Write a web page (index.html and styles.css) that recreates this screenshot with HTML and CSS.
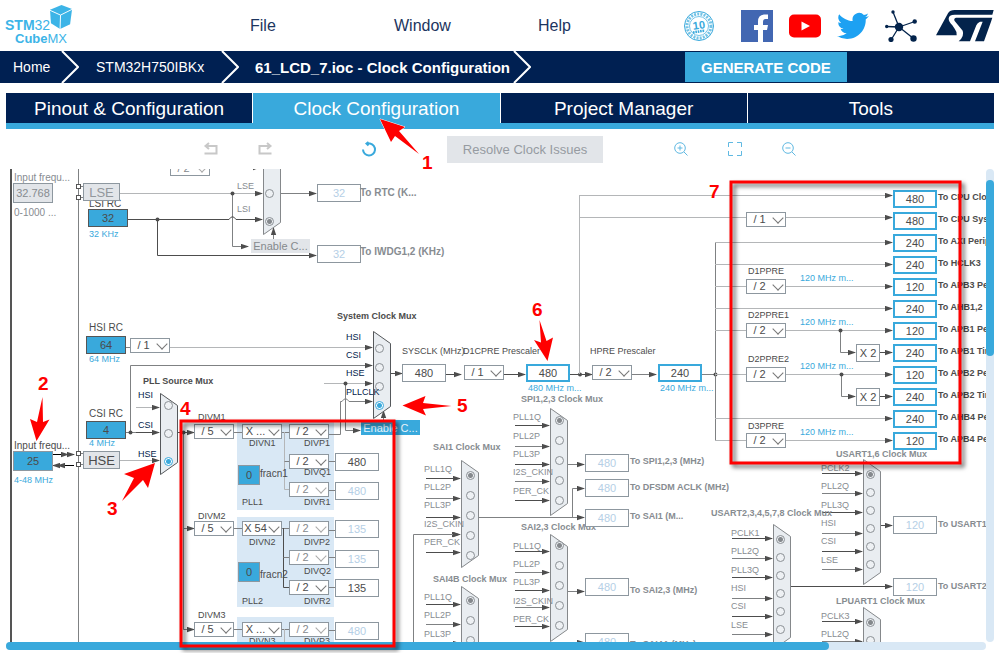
FILE: index.html
```html
<!DOCTYPE html>
<html lang="en">
<head>
<meta charset="utf-8">
<title>STM32CubeMX - Clock Configuration</title>
<link rel="stylesheet" href="styles.css">
</head>
<body>
<header class="top">
  <a class="brand" href="#" aria-label="STM32CubeMX">
    <span class="brand-one"><b>STM</b>32</span>
    <span class="brand-two"><b>Cube</b>MX</span>
    <svg class="cube" viewBox="0 0 24 26" aria-hidden="true">
      <path fill="#3cb4e7" d="M12 0 23 4 21 20 10.500 25 1 19 0 5Z"/>
      <path fill="none" stroke="#fff" stroke-width="1" d="M0 5.500 11 10.500 23 4.500M11 10.500 10.500 25"/>
    </svg>
  </a>
  <nav class="menu">
    <a href="#">File</a><a href="#">Window</a><a href="#">Help</a>
  </nav>
  <div class="social">
    <a href="#" aria-label="10 years longevity">
      <svg viewBox="0 0 32 32"><g fill="none" stroke="#39a9dc"><circle cx="16" cy="16" r="14.500"/><circle cx="16" cy="16" r="12" stroke-width="3" stroke-dasharray="2 1.200" opacity=".7"/><circle cx="16" cy="16" r="9.500" stroke-width=".7"/></g><text x="16" y="19" transform="rotate(-8 16 16)" text-anchor="middle" class="seal-number">10</text><path d="M10 22.500 22 20.500" stroke="#39a9dc" stroke-width="2.500" stroke-dasharray="1.600 .8"/></svg>
    </a>
    <a href="#" aria-label="Facebook">
      <svg viewBox="0 0 32 32"><path fill="#4267b2" d="M0 0H32V32H0Z"/><path fill="#fff" d="M17 32V20H13V15H17V11.500Q17 5 23 4.500H27V9H24.500Q22 9 22 12V15H27L26 20H22V32Z"/></svg>
    </a>
    <a href="#" aria-label="YouTube">
      <svg viewBox="0 0 32 32"><rect x="0" y="4.500" width="32" height="23" rx="5" fill="#f00"/><path fill="#fff" d="M12.500 11.500V20.500L21 16Z"/></svg>
    </a>
    <a href="#" aria-label="Twitter">
      <svg viewBox="0 0 24 24"><path fill="#1da1f2" d="M23.950 4.570a10 10 0 0 1-2.820.77 4.960 4.960 0 0 0 2.160-2.720c-.95.55-2 .95-3.130 1.180a4.920 4.920 0 0 0-8.380 4.480C7.690 8.100 4.070 6.130 1.640 3.160a4.920 4.920 0 0 0 1.520 6.570 4.900 4.900 0 0 1-2.230-.61v.06a4.920 4.920 0 0 0 3.950 4.830 5 5 0 0 1-2.210.08 4.940 4.940 0 0 0 4.600 3.420A9.870 9.870 0 0 1 0 19.540a14 14 0 0 0 7.550 2.210c9.050 0 14-7.500 14-13.980 0-.21 0-.42-.02-.63a9.940 9.940 0 0 0 2.420-2.570Z"/></svg>
    </a>
    <a href="#" aria-label="Community">
      <svg viewBox="0 0 32 32"><g fill="#03234b"><path stroke="#03234b" stroke-width="1.300" fill="none" d="M14 17 8 2M14 17 1.500 16.500M14 17 30 11.500M14 17 28.500 28.500M14 17 6 30"/><circle cx="14" cy="17" r="4.200"/><circle cx="8" cy="2" r="1.700"/><circle cx="1.700" cy="16.500" r="1.700"/><circle cx="29.700" cy="11.500" r="2.200"/><circle cx="28.500" cy="28.500" r="3.200"/><circle cx="6" cy="29.500" r="2.600"/></g></svg>
    </a>
    <a class="st" href="#" aria-label="ST">
      <svg viewBox="0 0 174 96"><g fill="#03234b"><path d="M36 10Q42 0 56 0H173L169 14H56Q38 14 38 26 38 34 49 46L56 56Q64 66 62 76H0Z"/><path d="M60 23Q52 25 56 33L80 62Q86 78 68 94H102L121 46Q124 38 132 35H140L117 94H144L165 35 169 23Z"/></g></svg>
    </a>
  </div>
</header>

<div class="pathbar">
  <ol class="crumbs">
    <li><a href="#">Home</a><svg viewBox="0 0 18 32"><path d="M1 0 17 16 1 32"/></svg></li>
    <li><a href="#">STM32H750IBKx</a><svg viewBox="0 0 18 32"><path d="M1 0 17 16 1 32"/></svg></li>
    <li class="current"><a href="#">61_LCD_7.ioc - Clock Configuration</a><svg viewBox="0 0 18 32"><path d="M1 0 17 16 1 32"/></svg></li>
  </ol>
  <button class="generate" type="button">GENERATE CODE</button>
</div>

<main class="work">
  <nav class="tabs">
    <a href="#">Pinout &amp; Configuration</a>
    <a class="active" href="#">Clock Configuration</a>
    <a href="#">Project Manager</a>
    <a href="#">Tools</a>
  </nav>
  <div class="tools">
    <div class="group history">
      <button class="icon muted" type="button" aria-label="Undo"><svg viewBox="0 0 14 14"><path d="M5 1 1.500 4 5 7M1.500 4H12.500V11.500H0.500" /></svg></button>
      <button class="icon muted" type="button" aria-label="Redo"><svg viewBox="0 0 14 14"><path d="M9 1 12.500 4 9 7M12.500 4H1.500V11.500H13.500"/></svg></button>
    </div>
    <button class="icon strong" type="button" aria-label="Reset"><svg viewBox="0 0 14 14"><path d="M4.500 1.500H8A6 6 0 1 1 1 7.500M6.500 0 4.500 1.500 6.500 3.500"/></svg></button>
    <button class="resolve" type="button" disabled>Resolve Clock Issues</button>
    <div class="group">
      <button class="icon" type="button" aria-label="Zoom in"><svg viewBox="0 0 14 14"><circle cx="6" cy="6" r="5.300"/><path d="M10 10 13.500 13.500M3.500 6H8.500M6 3.500V8.500"/></svg></button>
      <button class="icon" type="button" aria-label="Fit"><svg viewBox="0 0 14 14"><path d="M.5 5V.5H5M9 .5H13.500V5M13.500 9V13.500H9M5 13.500H.5V9"/></svg></button>
      <button class="icon" type="button" aria-label="Zoom out"><svg viewBox="0 0 14 14"><circle cx="6" cy="6" r="5.300"/><path d="M10 10 13.500 13.500M3.500 6H8.500"/></svg></button>
    </div>
  </div>
  <div class="pane">
    <div class="view"><div class="sheet" id="sheet"></div></div>
    <div class="bar-y"><div></div></div>
    <div class="bar-x"><div></div></div>
  </div>
</main>

<svg class="notes" viewBox="0 0 999 653" width="999" height="653" aria-hidden="true">
  <g class="frames">
    <rect x="181" y="421" width="213" height="225"/>
    <rect x="731" y="182" width="229" height="281"/>
  </g>
  <g class="pointers">
    <path d="M380 119 405 127 399 131 419 154 395 136 391 142Z"/>
    <path d="M36.500 441 30 419 37 422 42.500 397 43 422 49.500 419.500Z"/>
    <path d="M155 463 148 488 143 480 122 501 134 478 124 474Z"/>
    <path d="M402.500 405.500 425.500 396 423 403 451.500 406 423 409 426 415.500Z"/>
    <path d="M547.500 361 534 340 541 342.500 539.500 320 546.500 341 553 337.500Z"/>
  </g>
  <g class="digits">
    <text x="422" y="169">1</text><text x="38" y="390">2</text><text x="107" y="515">3</text>
    <text x="180" y="415">4</text><text x="457" y="412">5</text><text x="532" y="316">6</text><text x="709" y="198">7</text>
  </g>
</svg>
<script src="clock.js"></script>
</body>
</html>
```

FILE: styles.css
```css
* { box-sizing: border-box; }

body {
  margin: 0;
  min-height: 100vh;
  display: flex;
  flex-direction: column;
  position: relative;
  overflow: hidden;
  background: #fff;
  color: #4b4b4b;
  font-family: "Liberation Sans", Arial, sans-serif;
}

a { color: inherit; text-decoration: none; }
button { font: inherit; border: 0; padding: 0; background: none; }

/* Header */
.top { display: flex; align-items: center; height: 51px; padding-right: 5px; }
.brand {
  position: relative;
  width: 250px;
  padding: 13px 0 0 5px;
  color: #3cb4e7;
  font-size: 14px;
  line-height: 14px;
}
.brand span { display: block; }
.brand-two { padding-left: 10px; font-size: 13px; }
.cube { position: absolute; left: 50px; top: 0; width: 23px; height: 25px; }
.menu { display: grid; grid-template-columns: repeat(3, 144px); color: #1c3560; font-size: 16px; }
.social { display: flex; align-items: center; gap: 16px; margin-left: auto; }
.social svg { display: block; width: 32px; height: 32px; }
.social a:first-child { margin-right: 10px; }
.social .st svg { width: 58px; }
.social .st { margin-left: 3px; }
.seal-number { fill: #39a9dc; font-size: 11px; font-weight: bold; }

/* Breadcrumbs */
.pathbar { display: flex; align-items: stretch; height: 32px; background: #002052; color: #fff; }
.crumbs {
  display: grid;
  grid-template-columns: 79px 160px 292px;
  margin: 0 154px 0 0;
  padding: 0;
  list-style: none;
  font-size: 14px;
}
.crumbs li { display: flex; align-items: center; justify-content: space-between; padding-left: 17px; white-space: nowrap; }
.crumbs li:first-child { padding-left: 13px; }
.crumbs .current { padding-left: 16px; font-weight: bold; font-size: 15px; }
.crumbs svg { width: 18px; height: 32px; flex: none; fill: none; stroke: #fff; stroke-width: 2; }
.generate { margin: 1px 0; padding: 0 16px; background: #39a9dc; color: #fff; font-size: 15px; font-weight: bold; }

/* Tabs and toolbar */
.work { flex: 1; display: flex; flex-direction: column; padding: 10px 5px 3px 6px; }
.tabs { display: grid; grid-template-columns: repeat(4, 1fr); gap: 1px; border-bottom: 6px solid #39a9dc; }
.tabs a { height: 30px; line-height: 31px; background: #002052; color: #fff; font-size: 19px; text-align: center; }
.tabs .active { background: #39a9dc; }
.tools { display: flex; align-items: center; gap: 63px; height: 40px; padding-left: 190px; }
.group { display: flex; gap: 24px; }
.history { margin-right: 11px; }
.icon { width: 30px; height: 28px; display: grid; place-items: center; }
.icon svg { width: 14px; height: 14px; overflow: visible; fill: none; stroke: #60b9e2; stroke-width: 1; }
.icon.muted svg { stroke: #c8c8c8; stroke-width: 2; }
.icon.strong svg { stroke: #39a9dc; stroke-width: 2; }
.resolve { width: 156px; height: 27px; background: #e2e5e9; color: #969ba1; font-size: 13px; white-space: nowrap; }

/* Scrolling pane */
.pane { flex: 1; display: grid; grid-template-columns: 1fr 8px; grid-template-rows: 1fr 8px; min-height: 0; }
.view { position: relative; overflow: hidden; }
.sheet { position: absolute; left: -6px; top: -169px; width: 1200px; height: 1300px; }
.bar-y, .bar-x { background: #d9e8f5; border-radius: 4px; }
.bar-y { padding-top: 11px; }
.bar-y div { height: 38%; border-radius: 4px; background: #39a9dc; }
.bar-x div { width: 84%; height: 8px; border-radius: 4px; background: #39a9dc; }

/* Diagram */
.wires { position: absolute; left: 0; top: 0; }
.wires .line { fill: none; stroke: #7f8183; }
.wires .faint { stroke: #b4b6b8; }
.wires .deep { stroke: #4d4d4d; }
.wires .black { stroke: #000; }
.wires .mux { fill: #e9edf1; stroke: #55585b; }
.wires .mux.off { stroke: #85888b; }
.wires .panel { fill: #d9e8f5; }
.wires .rail { fill: #555; }
.wires .pin { fill: #fff; stroke: #555; }
.wires .dot { fill: #4d4d4d; }

.text { position: absolute; font-size: 9px; line-height: 12px; white-space: pre; }
.text.input { font-size: 10px; }
.text.dim { color: #878c91; }
.text.navy { color: #03234b; }
.text.sky { color: #39a9dc; }
.text.title { font-weight: bold; }

.box {
  position: absolute;
  height: 18px;
  margin: 0;
  padding: 0;
  border: 1px solid #8d979f;
  border-radius: 0;
  background: #fff;
  color: #4b4b4b;
  font-family: inherit;
  font-size: 11px;
  text-align: center;
}
.box.off { color: #b5cfe6; }
.box.hot { border: 2px solid #39a9dc; }
.box.full { background: #39a9dc; border-color: #555; }
.box.entry { height: 20px; background: #39a9dc; border-color: #8d979f; }
.box.entry.gone { background: #e2e5e9; color: #868b90; }
.box.osc { background: #e2e5e9; font-size: 13px; }
.box.osc.gone { color: #92979c; }
.box.enable { height: 14px; border: 0; background: #e2e5e9; color: #85898d; }
.box.enable.live { height: 15px; background: #39a9dc; color: #e8f4fb; }

.pick { position: absolute; width: 40px; height: 15px; }
.pick select {
  appearance: none;
  display: block;
  width: 100%;
  height: 100%;
  margin: 0;
  padding: 0 13px 0 0;
  border: 1px solid #8d979f;
  border-radius: 0;
  background: #fff;
  color: #4b4b4b;
  font-family: inherit;
  font-size: 11px;
  line-height: 13px;
  text-align: center;
  text-align-last: center;
}
.pick::after {
  content: "";
  position: absolute;
  right: 4px;
  top: 2px;
  width: 7px;
  height: 7px;
  border: solid #777;
  border-width: 0 1px 1px 0;
  transform: rotate(45deg);
  pointer-events: none;
}
.pick.off select { color: #85898d; }
.pick.off::after { border-color: #aaa; }

.dotpick {
  appearance: none;
  position: absolute;
  width: 9px;
  height: 9px;
  margin: 0;
  border: 1px solid #8b9095;
  border-radius: 50%;
  background: #eef1f4;
}
.dotpick:checked { background: radial-gradient(circle, #85898d 0 2px, #eef1f4 3px); }
.dotpick.live:checked { border-color: #39a9dc; background: radial-gradient(circle, #39a9dc 0 2px, #fff 3px); }

/* Callouts */
.notes { position: absolute; left: 0; top: 0; pointer-events: none; }
.frames rect { fill: none; stroke: #f00; stroke-width: 3; }
.frames { filter: drop-shadow(3px 3px 2px rgba(0, 0, 0, .6)); }
.pointers path { fill: #f00; stroke: #fff; stroke-width: 1; paint-order: stroke; }
.digits { fill: #f00; font-size: 19px; font-weight: bold; }
```

FILE: clock.js
```js
const sheet = document.getElementById("sheet");
let serial = 0;

/* Texts: [text, left, vertical centre, classes] */
function text([value, x, y, cls = ""], target) {
  const el = document.createElement(target ? "label" : "span");
  if (target) el.htmlFor = target;
  el.className = "text " + cls;
  el.textContent = value;
  el.style.left = x + "px";
  el.style.top = y - 6 + "px";
  sheet.append(el);
}

function place(el, x, y, w) {
  el.style.left = x + "px";
  el.style.top = y + "px";
  if (w) el.style.width = w + "px";
  sheet.append(el);
}

/* Value fields: [value, left, top, width, classes, label text] */
function field([value, x, y, w, cls, label]) {
  const el = document.createElement("input");
  el.type = "text";
  el.id = "n" + ++serial;
  el.value = value;
  el.className = "box " + cls;
  place(el, x, y, w);
  if (label) text(label, el.id);
  else el.setAttribute("aria-label", "Frequency");
}

function button([value, x, y, w, cls]) {
  const el = document.createElement("button");
  el.type = "button";
  el.textContent = value;
  el.className = "box " + cls;
  place(el, x, y, w);
}

/* Dividers: [value, left, top, classes, label text] */
function pick([value, x, y, cls = "", label]) {
  const wrap = document.createElement("div");
  const el = document.createElement("select");
  wrap.className = "pick " + cls;
  el.id = "n" + ++serial;
  el.add(new Option(value));
  wrap.append(el);
  place(wrap, x, y);
  if (label) text(label, el.id);
  else el.setAttribute("aria-label", "Divider");
}

const shapes = [];
const line = (d, cls = "") => shapes.push(`<path class="line ${cls}" d="M${d}"/>`);
const arrow = (d, cls = "") => shapes.push(`<path class="line ${cls}" marker-end="url(#tip)" d="M${d}"/>`);
const dot = (x, y) => shapes.push(`<circle class="dot" cx="${x}" cy="${y}" r="2"/>`);
const pin = (x, y) => shapes.push(`<rect class="pin" x="${x}" y="${y}" width="4" height="4"/>`);

/* Selector: body from top to bottom, one radio per input */
function mux(m) {
  const l = m.x + 0.5, r = m.x + 17.5;
  shapes.push(`<path class="mux ${m.live ? "" : "off"}" d="M${l} ${m.top}.5L${r} ${m.top + 12}.5V${m.bottom - 12}.5L${l} ${m.bottom}.5Z"/>`);
  if (m.title) text([m.title[0], m.title[1], m.title[2], "title" + (m.live ? "" : " dim")]);
  m.rows.forEach(([name, labelY, wireY, radioY], i) => {
    const el = document.createElement("input");
    el.type = "radio";
    el.name = "mux" + m.x + "-" + m.top;
    el.id = "n" + ++serial;
    el.checked = i === m.on;
    el.className = "dotpick" + (m.live ? " live" : "");
    place(el, m.radioX - 4, radioY - 4);
    text([name, m.labelX, labelY, m.live ? "navy" : "dim"], el.id);
    if (m.wireX) arrow(`${m.wireX} ${wireY}.5H${m.x - 1}`, i % 2 ? "" : "deep");
  });
}

/* Frame of the chip and its pins */
shapes.push('<rect class="rail" x="10" y="169" width="2" height="700"/>');
line("78.5 169V869");
for (const y of [186, 197, 453, 464]) line(`80 ${y}.5H83`);
for (const y of [184, 195, 451, 462]) pin(76.5, y + 0.5);

/* PLL panels */
for (const [y, h] of [[421, 89], [517, 90], [617, 90]]) {
  shapes.push(`<rect class="panel" x="237" y="${y}" width="97" height="${h}"/>`);
}

/* Low speed wiring */
arrow("120 193.5H262", "faint");
arrow("232.5 193V246.5H248");
arrow("128 219.5H229Q232.5 214 236 219.5H262", "deep");
arrow("157.5 219V255.5H316", "deep");
arrow("273.500 240V228");
arrow("250 167.500H260");
arrow("281 193.5H316");
dot(232.5, 193.5); dot(157.5, 219.5);

/* Sources into the system selector */
line("126 347.5H130");
arrow("170 347.5H372", "faint");
line("126 432.5H136");
arrow("130.5 432V365.5H372");
arrow("136 407.5H159", "faint");
arrow("136 432.5H159", "deep");
arrow("120 460.5H159", "faint");
dot(130.5, 432.5);
arrow("324 383.5H372", "faint");
arrow("345.5 383V430.5H360");
arrow("329 434.500H340.5V401.500H342Q345.500 396 349 401.500H372");
arrow("383.500 420V411");
dot(345.5, 383.5);
arrow("53 454.5H74", "black"); arrow("60 454.5H68", "black");
arrow("74 465.5H53", "black"); arrow("70 465.5H58", "black");

/* PLL wiring */
arrow("178 432.5H194", "deep");
arrow("183.5 432V528.5H194");
arrow("183.5 528V629.5H194");
dot(183.5, 432.5);
for (const y of [432, 528, 629]) { line(`234 ${y}.5H242`); line(`282 ${y}.5H289`); }
line("284.5 432V489.5H289", "faint"); line("284.5 461.5H289");
line("283.5 528V587.5H289", "deep"); line("283.5 557.5H289");
line("284.500 629V700", "faint");
for (const y of [461, 490, 530, 557, 587, 630]) line(`329 ${y}.5H335`);

/* System clock chain */
arrow("391 373.5H402", "deep"); arrow("446 374.5H461", "deep");
arrow("504 374.5H525", "deep"); arrow("570 374.5H592", "deep");
arrow("632 374.5H656"); line("702 374.5H746");
dot(580, 374.5); dot(715.5, 374.5);
line("579.5 374V195.5", "faint");
line("715.5 242V440");
arrow("579 195.5H892", "faint");
arrow("579 217.5H892", "faint");
[242, 264, 286, 308, 330, 374, 418, 440].forEach(y => arrow(`715 ${y}.5H892`, "faint"));
arrow("840.5 330V352.5H855"); arrow("841.5 374V396.5H855");
arrow("880 352.5H892", "deep"); arrow("880 396.5H892", "deep");
dot(840.5, 330.5); dot(841.5, 374.5);

/* Peripheral wiring */
arrow("568 464.5H584"); arrow("479 517.5H584"); arrow("572.5 517V488.5H584");
arrow("568 591.5H584"); arrow("413.5 700V534.5H459"); arrow("572 642.500H584");
arrow("881 525.5H892", "deep"); arrow("791 586.5H892", "deep");

/* Selectors; rows are [name, label y, wire y, radio y] */
mux({ x: 263, top: 120, bottom: 234, radioX: 269, labelX: 237, on: 1,
  rows: [["LSE", 186, 0, 193], ["LSI", 209, 0, 221]] });
mux({ x: 160, top: 393, bottom: 474, radioX: 168, labelX: 138, on: 2, live: true,
  title: ["PLL Source Mux", 143, 381],
  rows: [["HSI", 395, 0, 405], ["CSI", 425, 0, 433], ["HSE", 454, 0, 461]] });
mux({ x: 373, top: 331, bottom: 418, radioX: 379, labelX: 346, on: 3, live: true,
  title: ["System Clock Mux", 337, 316],
  rows: [["HSI", 337, 0, 348], ["CSI", 355, 0, 367], ["HSE", 373, 0, 386], ["PLLCLK", 392, 0, 405]] });

const audio = ["PLL1Q", "PLL2P", "PLL3P", "I2S_CKIN", "PER_CK"];
function audioMux(x, top, title, labels, wires, radios) {
  mux({ x, top, bottom: top + 107, radioX: x + 9, labelX: x - 37, wireX: x - 35, on: 0, title,
    rows: radios.map((r, i) => [audio[i], labels[i], wires[i], r]) });
}
audioMux(550, 408, ["SPI1,2,3 Clock Mux", 521, 399], [417, 436, 454, 472, 491], [425, 446, 464, 481, 500], [420, 440, 460, 480, 500]);
audioMux(461, 460, ["SAI1 Clock Mux", 433, 447], [469, 487, 505, 524, 542], [478, 498, 517, 534, 552], [475, 495, 515, 535, 555]);
audioMux(550, 534, ["SAI2,3 Clock Mux", 521, 527], [546, 564, 582, 601, 619], [551, 572, 590, 607, 626], [545, 565, 585, 605, 625]);
audioMux(461, 586, ["SAI4B Clock Mux", 433, 579], [597, 615, 634], [604, 624, 643], [600, 620, 640]);

function uartMux(x, top, names, title) {
  mux({ x, top, bottom: top + 125, radioX: x + 7, labelX: x - 42, wireX: x - 41, on: 0, title,
    rows: names.map((n, i) =>
      [n, top + [9, 27, 46, 64, 82, 101][i], top + [14, 34, 53, 74, 92, 110][i], top + 15 + i * 18]) });
}
uartMux(863, 459, ["PCLK2", "PLL2Q", "PLL3Q", "HSI", "CSI", "LSE"], ["USART1,6 Clock Mux", 836, 454]);
uartMux(773, 524, ["PCLK1", "PLL2Q", "PLL3Q", "HSI", "CSI", "LSE"], ["USART2,3,4,5,7,8 Clock Mux", 711, 513]);
uartMux(863, 607, ["PCLK3", "PLL2Q"], ["LPUART1 Clock Mux", 836, 601]);

/* Oscillators and inputs */
[
  ["32.768", 13, 183, 40, "entry gone", ["Input frequ...", 14, 178, "input dim"]],
  ["25", 13, 451, 40, "entry", ["Input frequ...", 14, 446, "input"]],
  ["32", 88, 209, 40, "full", ["LSI RC", 89, 204, "input"]],
  ["64", 86, 336, 40, "full", ["HSI RC", 89, 328, "input"]],
  ["4", 86, 421, 40, "full", ["CSI RC", 89, 414, "input"]],
  ["0", 238, 465, 22, "entry", ["fracn1", 260, 474, "input"]],
  ["0", 238, 562, 22, "entry", ["fracn2", 260, 575, "input"]],
  ["32", 317, 184, 44, "off", ["To RTC (K...", 360, 193, "input title dim"]],
  ["32", 317, 245, 44, "off", ["To IWDG1,2 (KHz)", 360, 252, "input title dim"]],
  ["480", 402, 364, 44, "", ["SYSCLK (MHz)", 402, 351]],
  ["480", 526, 364, 44, "hot"],
  ["240", 658, 364, 44, "hot"],
  ["480", 335, 453, 44, ""],
  ["480", 335, 482, 44, "off"],
  ["135", 335, 520, 44, "off"],
  ["135", 335, 550, 44, "off"],
  ["135", 335, 579, 44, ""],
  ["480", 335, 622, 44, "off"],
  ["480", 585, 454, 44, "off", ["To SPI1,2,3 (MHz)", 630, 461, "title dim"]],
  ["480", 585, 479, 44, "off", ["To DFSDM ACLK (MHz)", 630, 487, "title dim"]],
  ["480", 585, 509, 44, "off", ["To SAI1 (M...", 630, 516, "title dim"]],
  ["480", 585, 578, 44, "off", ["To SAI2,3 (MHz)", 630, 590, "title dim"]],
  ["480", 585, 633, 44, "off", ["To SAI4A (MHz)", 630, 644, "title dim"]],
  ["120", 893, 516, 44, "off", ["To USART1,6 (MHz)", 938, 524, "title dim"]],
  ["120", 893, 578, 44, "off", ["To USART2,3 (MHz)", 938, 586, "title dim"]],
  ["X 2", 856, 344, 24, ""],
  ["X 2", 856, 388, 24, ""],
].forEach(field);

/* Bus outputs, one row every 22 units */
[
  ["480", "CPU Clock"], ["480", "CPU Systick"], ["240", "AXI Peripheral"], ["240", "HCLK3"],
  ["120", "APB3 Peripheral"], ["240", "AHB1,2"], ["120", "APB1 Peripheral"], ["240", "APB1 Timer"],
  ["120", "APB2 Peripheral"], ["240", "APB2 Timer"], ["240", "AHB4 Peripheral"], ["120", "APB4 Peripheral"],
].forEach(([value, name], i) =>
  field([value, 893, 190 + 22 * i, 44, "hot", ["To " + name, 938, 197 + 22 * i, "title"]]));

[
  ["LSE", 83, 183, 37, "osc gone"],
  ["HSE", 83, 451, 37, "osc"],
  ["Enable C...", 251, 239, 59, "enable"],
  ["Enable C...", 361, 420, 59, "enable live"],
].forEach(button);

[
  ["/ 2", 170, 161, "off"],
  ["/ 1", 130, 338],
  ["/ 5", 194, 424, "", ["DIVM1", 198, 417]],
  ["/ 5", 194, 521, "", ["DIVM2", 198, 516]],
  ["/ 5", 194, 622, "", ["DIVM3", 198, 615]],
  ["X ...", 242, 424, "", ["DIVN1", 249, 443]],
  ["/ 2", 289, 424, "", ["DIVP1", 304, 443]],
  ["/ 2", 289, 454, "", ["DIVQ1", 304, 472]],
  ["/ 2", 289, 482, "off", ["DIVR1", 304, 502]],
  ["X 54", 242, 521, "", ["DIVN2", 249, 542]],
  ["/ 2", 289, 521, "off", ["DIVP2", 304, 542]],
  ["/ 2", 289, 550, "off", ["DIVQ2", 304, 571]],
  ["/ 2", 289, 580, "", ["DIVR2", 304, 601]],
  ["X ...", 242, 622, "", ["DIVN3", 249, 641]],
  ["/ 2", 289, 622, "off", ["DIVP3", 304, 641]],
  ["/ 1", 464, 365, "", ["D1CPRE Prescaler", 463, 351]],
  ["/ 2", 592, 365, "", ["HPRE Prescaler", 590, 351]],
  ["/ 1", 746, 212],
  ["/ 2", 746, 279, "", ["D1PPRE", 748, 271]],
  ["/ 2", 746, 323, "", ["D2PPRE1", 748, 315]],
  ["/ 2", 746, 367, "", ["D2PPRE2", 748, 359]],
  ["/ 2", 746, 433, "", ["D3PPRE", 748, 426]],
].forEach(pick);

[
  ["0-1000 ...", 14, 213, "input dim"],
  ["4-48 MHz", 14, 480, "sky"],
  ["32 KHz", 89, 234, "sky"],
  ["64 MHz", 89, 359, "sky"],
  ["4 MHz", 89, 443, "sky"],
  ["PLL1", 242, 502],
  ["PLL2", 242, 601],
  ["480 MHz m...", 528, 388, "sky"],
  ["240 MHz m...", 660, 388, "sky"],
  ["120 MHz m...", 800, 278, "sky"],
  ["120 MHz m...", 800, 322, "sky"],
  ["120 MHz m...", 800, 366, "sky"],
  ["120 MHz m...", 800, 432, "sky"],
].forEach(item => text(item));

sheet.insertAdjacentHTML("afterbegin",
  `<svg class="wires" width="1200" height="1300" viewBox="0 0 1200 1300" aria-hidden="true">
    <defs><marker id="tip" markerUnits="userSpaceOnUse" markerWidth="8" markerHeight="6" refX="7" refY="3" orient="auto"><path d="M0 .3 8 3 0 5.700Z" fill="#4d4d4d"/></marker></defs>
    ${shapes.join("")}
  </svg>`);
```
